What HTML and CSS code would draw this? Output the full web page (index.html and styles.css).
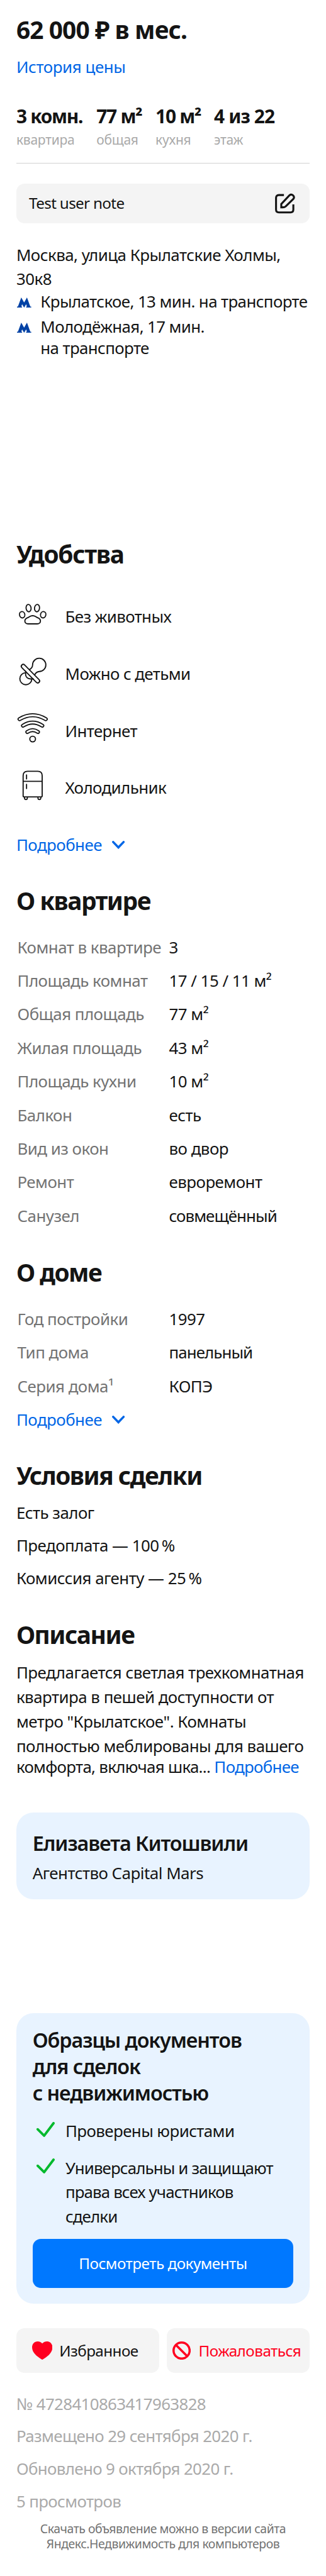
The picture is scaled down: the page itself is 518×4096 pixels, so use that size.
FILE: index.html
```html
<!DOCTYPE html>
<html lang="ru">
<head>
<meta charset="utf-8">
<title>62 000 ₽ в мес.</title>
<link rel="stylesheet" href="styles.css">
</head>
<body>
<main class="offer">
  <h1 class="price">62 000 ₽ в мес.</h1>
  <a class="link history">История цены</a>

  <ul class="stats">
    <li><b>3 комн.</b><span>квартира</span></li>
    <li><b>77 м²</b><span>общая</span></li>
    <li><b>10 м²</b><span>кухня</span></li>
    <li><b>4 из 22</b><span>этаж</span></li>
  </ul>

  <div class="note">
    <span>Test user note</span>
    <svg class="note-icon" viewBox="0 0 40 40" fill="none" stroke="#141414" stroke-width="3.8"><path d="M17.5 3.9H7.5Q2 3.9 2 9.4V32.5Q2 38 7.5 38H30.500Q36 38 36 32.500V22.300"/><path d="M12.300 28V21.500L28.500 4.300A5.300 5.300 0 0 1 36.200 11.400L21 26Q18.800 28 15.500 28Z"/></svg>
  </div>

  <p class="address">Москва, улица Крылатские Холмы,<br>30к8</p>
  <ul class="metro">
    <li><svg class="metro-icon" viewBox="0 0 28 20"><path d="M0 20v-2.200h1.800L8.400 0 14 10 19.600 0l6.600 17.800H28V20H18v-2.200h1.500L18 13.200 14 20l-4-6.800-1.500 4.600H10V20z"/></svg><span>Крылатское, 13 мин. на транспорте</span></li>
    <li><svg class="metro-icon" viewBox="0 0 28 20"><path d="M0 20v-2.200h1.800L8.400 0 14 10 19.600 0l6.600 17.800H28V20H18v-2.200h1.500L18 13.200 14 20l-4-6.800-1.500 4.600H10V20z"/></svg><span>Молодёжная, 17 мин.<br>на транспорте</span></li>
  </ul>

  <section class="comfort">
    <h2>Удобства</h2>
    <ul class="features">
      <li>
        <svg class="feature-icon" viewBox="0 0 64 64"><ellipse cx="24" cy="19.700" rx="4.900" ry="7.200" transform="rotate(-7 24 19.700)"/><ellipse cx="40.600" cy="19.700" rx="4.900" ry="7.200" transform="rotate(7 40.600 19.700)"/><ellipse cx="11.400" cy="32.700" rx="5.200" ry="6.300" transform="rotate(-15 11.400 32.700)"/><ellipse cx="52.700" cy="32.700" rx="5.200" ry="6.300" transform="rotate(15 52.700 32.700)"/><path d="M23 50.700h18c4 0 6.300-2.600 6.300-5.500 0-3.300-1.800-5-5-6.300-5-2-5.200-4.300-10.300-4.300s-5.300 2.300-10.300 4.300c-3.200 1.300-5 3-5 6.300 0 2.900 2.300 5.500 6.300 5.500z"/></svg>
        <span>Без животных</span>
      </li>
      <li>
        <svg class="feature-icon" viewBox="0 0 64 64"><rect x="3.700" y="32.200" width="48" height="7.600" rx="3.800" transform="rotate(45.500 27.700 36)"/><path d="M25.900 28c4-2.400 5.900-5.400 6-9.200A13 13 0 1 1 45 31.800c-4 .3-6.500 2-9 6.500M17.800 31c1.400 2 .3 3.500.3 6 0 5.500 4 9.300 9.500 9.300 2.500 0 4-1 6 .5M18.200 34.200A11.800 11.800 0 1 0 30.400 46.500"/></svg>
        <span>Можно с детьми</span>
      </li>
      <li>
        <svg class="feature-icon" viewBox="0 0 64 64"><g class="band"><path d="M6.200 14.200Q32-1.200 57.800 14.200M13 27Q32 14.800 51 27M21.600 39.400Q32 32.200 42.400 39.400"/></g><g class="band-inner"><path d="M6.200 14.200Q32-1.200 57.800 14.200M13 27Q32 14.800 51 27M21.600 39.400Q32 32.200 42.400 39.400"/></g><circle cx="32" cy="53.300" r="5.600"/></svg>
        <span>Интернет</span>
      </li>
      <li>
        <svg class="feature-icon" viewBox="0 0 64 64"><path d="M13.300 13Q13.300 4.200 22 4.200H42Q50.700 4.200 50.700 13V52.500Q50.700 54.600 48.600 54.600H15.400Q13.300 54.600 13.300 52.500ZM13.300 24H50.700M20 11.500V19.300M20 30V38M16 54.600v2a2.800 3.200 0 0 0 5.600 0v-2M42.400 54.600v2a2.800 3.200 0 0 0 5.600 0v-2"/></svg>
        <span>Холодильник</span>
      </li>
    </ul>
    <a class="link more">Подробнее <svg class="chevron" viewBox="0 0 25 16"><path d="M2.300 2.300 12.500 13 22.700 2.300"/></svg></a>
  </section>

  <section class="flat">
    <h2>О квартире</h2>
    <dl class="specs">
      <dt>Комнат в квартире</dt><dd>3</dd>
      <dt>Площадь комнат</dt><dd>17 / 15 / 11 м²</dd>
      <dt>Общая площадь</dt><dd>77 м²</dd>
      <dt>Жилая площадь</dt><dd>43 м²</dd>
      <dt>Площадь кухни</dt><dd>10 м²</dd>
      <dt>Балкон</dt><dd>есть</dd>
      <dt>Вид из окон</dt><dd>во двор</dd>
      <dt>Ремонт</dt><dd>евроремонт</dd>
      <dt>Санузел</dt><dd class="tight">совмещённый</dd>
    </dl>
  </section>

  <section class="house">
    <h2>О доме</h2>
    <dl class="specs">
      <dt>Год постройки</dt><dd>1997</dd>
      <dt>Тип дома</dt><dd class="tight">панельный</dd>
      <dt>Серия дома¹</dt><dd>КОПЭ</dd>
    </dl>
    <a class="link more">Подробнее <svg class="chevron" viewBox="0 0 25 16"><path d="M2.300 2.300 12.500 13 22.700 2.300"/></svg></a>
  </section>

  <section class="terms">
    <h2>Условия сделки</h2>
    <ul class="lines">
      <li>Есть залог</li>
      <li>Предоплата — 100&#8239;%</li>
      <li>Комиссия агенту — 25&#8239;%</li>
    </ul>
  </section>

  <section class="description">
    <h2>Описание</h2>
    <p>Предлагается светлая трехкомнатная<br>квартира в пешей доступности от<br>метро "Крылатское". Комнаты<br>полностью меблированы для вашего</p>
    <p class="last">комфорта, включая шка... <a class="link">Подробнее</a></p>
  </section>

  <section class="card agent">
    <h3>Елизавета Китошвили</h3>
    <p>Агентство Capital Mars</p>
  </section>

  <section class="card docs">
    <h3>Образцы документов<br>для сделок<br>с недвижимостью</h3>
    <ul class="checks">
      <li><svg class="check" viewBox="0 0 36 30"><path d="M2.300 14.500 15 27 33.500 2.500"/></svg><span>Проверены юристами</span></li>
      <li><svg class="check" viewBox="0 0 36 30"><path d="M2.300 14.500 15 27 33.500 2.500"/></svg><span>Универсальны и защищают<br>права всех участников<br>сделки</span></li>
    </ul>
    <button class="primary">Посмотреть документы</button>
  </section>

  <div class="actions">
    <button class="favorite"><svg class="heart" viewBox="0 0 40 36"><path d="M20 4C17 1 14.500 0 11 0 4.500 0 0 5 0 11.500 0 22 9 29.500 20 36 31 29.500 40 22 40 11.500 40 5 35.500 0 29 0c-3.500 0-6 1-9 4z"/></svg>Избранное</button>
    <button class="complain"><svg class="ban" viewBox="0 0 36 36"><circle cx="18" cy="18" r="15.800"/><path d="M7 7 29 29"/></svg>Пожаловаться</button>
  </div>

  <ul class="lines meta">
    <li>№ 4728410863417963828</li>
    <li>Размещено 29 сентября 2020 г.</li>
    <li>Обновлено 9 октября 2020 г.</li>
    <li>5 просмотров</li>
  </ul>
  <p class="download">Скачать объявление можно в версии сайта<br>Яндекс.Недвижимость для компьютеров</p>
</main>
</body>
</html>
```
FILE: styles.css
```css
/* 1rem is ten design pixels */
html { font-size: 8.0886px; }
* { box-sizing: border-box; }
body {
  margin: 0;
  background: #fff;
  color: #141414;
  font: 3.2rem/4rem "Noto Sans", sans-serif;
  letter-spacing: -0.02em;
  white-space: nowrap;
}
h1, h2, h3, p, ul, dl, dd { margin: 0; padding: 0; }
ul { list-style: none; }
svg { display: block; flex: none; }
button { font: inherit; letter-spacing: inherit; border: 0; padding: 0; color: inherit; }

.offer { padding: 3.04rem 3.2rem 4.8rem; }
.link { color: #0066e6; }

h1, h2 { font-size: 4.8rem; line-height: 5.6rem; font-weight: 700; letter-spacing: -0.038em; }
.price { letter-spacing: -0.0225em; }
.history { display: block; margin-top: 2.5rem; letter-spacing: -0.0157em; }

.stats {
  display: grid;
  grid-template-columns: 15.75rem 11.6rem 11.5rem 1fr;
  margin-top: 5.52rem;
  padding-bottom: 2.8rem;
  border-bottom: 1px solid #d2d2d2;
}
.stats b { display: block; font-size: 3.7rem; line-height: 4.4rem; letter-spacing: -0.043em; }
.stats li:nth-child(4) b { letter-spacing: -0.03em; }
.stats span { display: block; margin-top: 0.93rem; font-size: 2.6rem; line-height: 3.2rem; letter-spacing: -0.012em; color: #aaa; }

.note {
  display: flex;
  align-items: center;
  justify-content: space-between;
  height: 7.8rem;
  margin-top: 4rem;
  padding: 0 2.8rem 0 2.5rem;
  border-radius: 1.6rem;
  background: #f4f4f4;
  font-size: 3rem;
  letter-spacing: -0.028em;
}
.note-icon { width: 4rem; height: 4rem; }

.address { margin-top: 3.8rem; line-height: 4.75rem; }
.metro li { display: flex; line-height: 4.2rem; letter-spacing: -0.0234em; }
.metro li + li { margin-top: 0.8rem; }
.metro-icon { width: 2.8rem; height: 2rem; margin: 1.25rem 1.75rem 0 0.2rem; fill: #0042a5; }

.comfort { margin-top: 35.65rem; }
.comfort h2 { letter-spacing: -0.032em; }
.features { display: grid; gap: 4.8rem; margin-top: 5.72rem; }
.features li { display: flex; height: 6.4rem; gap: 3.2rem; letter-spacing: -0.023em; }
.features span { margin-top: 1.65rem; }
.feature-icon { width: 6.4rem; height: 6.4rem; fill: none; stroke: #141414; stroke-width: 2.3; stroke-linecap: round; }
.band { stroke-width: 7.9; }
.band-inner { stroke: #fff; stroke-width: 3.4; }
.more { display: flex; align-items: center; gap: 2rem; }
.comfort .more { margin-top: 6.5rem; }
.chevron { width: 2.5rem; height: 1.6rem; fill: none; stroke: currentColor; stroke-width: 4.4; stroke-linecap: round; }

.flat { margin-top: 6.25rem; }
.specs { display: grid; grid-template-columns: 29.8rem 1fr; margin-top: 3.02rem; padding-left: 0.2rem; line-height: 6.6rem; }
.specs dt { color: #737373; }
.specs .tight { letter-spacing: -0.036em; }
.house { margin-top: 5.05rem; }
.house .more { margin-top: 1.25rem; }

.terms { margin-top: 6.2rem; }
.lines { line-height: 6.4rem; }
.terms .lines { margin-top: 1.42rem; }

.description { margin-top: 5.11rem; }
.description p { margin-top: 2.2rem; line-height: 4.8rem; }
.description .last { margin-top: 0; line-height: 3.5rem; letter-spacing: -0.027em; }

.card { border-radius: 3.4rem; background: #e8f3ff; }
.card h3 { font-size: 4rem; font-weight: 600; letter-spacing: -0.034em; }
.agent { height: 17rem; margin-top: 7.24rem; padding: 3.55rem 3.2rem 0; }
.agent h3 { line-height: 4.8rem; }
.agent p { margin-top: 1.51rem; }

.docs { margin-top: 22.4rem; padding: 2.55rem 3.2rem 3.2rem; }
.docs h3 { line-height: 5.2rem; }
.checks { display: grid; gap: 2.4rem; margin-top: 2.67rem; line-height: 4.8rem; }
.checks li { display: flex; gap: 2.1rem; letter-spacing: -0.022em; }
.checks li + li { letter-spacing: -0.034em; }
.check { width: 3.6rem; height: 3rem; margin: 0.58rem 0 0 0.75rem; fill: none; stroke: #00b92d; stroke-width: 4.8; stroke-linecap: round; stroke-linejoin: round; }
.primary { display: block; width: 100%; height: 9.6rem; margin-top: 1.97rem; border-radius: 1.6rem; background: #0078ff; color: #fff; font-size: 3rem; }

.actions { display: grid; grid-template-columns: 1fr 1fr; gap: 1.4rem; margin-top: 4.8rem; }
.actions button { display: flex; align-items: center; height: 8.8rem; border-radius: 1.6rem; background: #f4f4f4; font-size: 3rem; }
.actions .favorite { gap: 1.35rem; padding-left: 3.1rem; letter-spacing: -0.023em; }
.actions .complain { gap: 1.6rem; padding-left: 1.1rem; color: #ff0020; }
.heart { width: 4rem; height: 3.6rem; fill: #ff0020; }
.ban { width: 3.6rem; height: 3.6rem; fill: none; stroke: currentColor; stroke-width: 4.4; }

.meta { margin-top: 2.88rem; color: #aaa; letter-spacing: -0.0243em; }
.download { margin-top: 0.61rem; font-size: 2.4rem; line-height: 3rem; letter-spacing: -0.0233em; text-align: center; color: #737373; }
```
